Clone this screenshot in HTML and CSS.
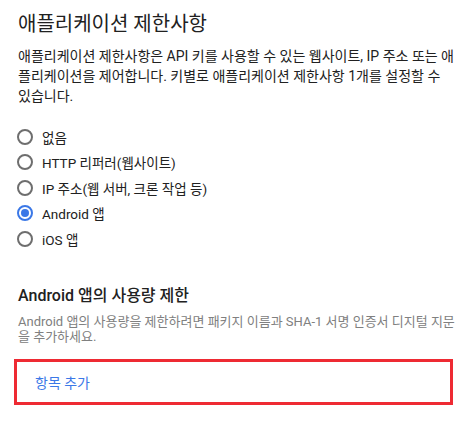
FILE: index.html
```html
<!DOCTYPE html>
<html lang="ko">
<head>
<meta charset="utf-8">
<link rel="stylesheet" href="styles.css">
</head>
<body>
<div class="page">
  <h2 class="title">애플리케이션 제한사항</h2>
  <p class="desc">애플리케이션 제한사항은 API 키를 사용할 수 있는 웹사이트, IP 주소 또는 애플리케이션을 제어합니다. 키별로 애플리케이션 제한사항 1개를 설정할 수 있습니다.</p>
  <div class="radios">
    <label class="radio"><span class="dot"></span>없음</label>
    <label class="radio"><span class="dot"></span>HTTP 리퍼러(웹사이트)</label>
    <label class="radio"><span class="dot"></span>IP 주소(웹 서버, 크론 작업 등)</label>
    <label class="radio"><span class="dot on"></span>Android 앱</label>
    <label class="radio"><span class="dot"></span>iOS 앱</label>
  </div>
  <h3 class="subtitle">Android 앱의 사용량 제한</h3>
  <p class="hint">Android 앱의 사용량을 제한하려면 패키지 이름과 SHA-1 서명 인증서 디지털 지문을 추가하세요.</p>
  <div class="addbox"><span class="add">항목 추가</span></div>
</div>
</body>
</html>
```
FILE: styles.css
```css
* { box-sizing: border-box; }
body {
  margin: 0;
  background: #fff;
  font-family: Roboto, "Noto Sans CJK KR", sans-serif;
  color: #212121;
}
.page {
  padding: 10px 15px 0 18px;
  width: 470px;
}
.title {
  margin: 0;
  font-size: 20px;
  font-weight: 400;
  line-height: 28px;
  color: #212121;
}
.desc {
  margin: 8px 0 0;
  font-size: 14px;
  line-height: 20px;
}
.radios {
  margin-top: 18px;
  display: flex;
  flex-direction: column;
}
.radio {
  display: flex;
  align-items: center;
  height: 25.5px;
  font-size: 13.5px;
}
.dot {
  width: 16px;
  height: 16px;
  border: 2px solid #6e6e6e;
  border-radius: 50%;
  margin: 0 9px 0 -1px;
  flex: none;
  display: flex;
  align-items: center;
  justify-content: center;
}
.dot.on { border-color: #3b78e7; }
.dot.on::after {
  content: "";
  width: 8px;
  height: 8px;
  border-radius: 50%;
  background: #3b78e7;
}
.subtitle {
  margin: 32px 0 0;
  font-size: 16px;
  font-weight: 500;
  line-height: 24px;
}
.hint {
  margin: 6px 0 0;
  font-size: 13px;
  line-height: 15px;
  color: #808080;
}
.addbox {
  margin: 15px 0 0 -4px;
  width: 439px;
  height: 46px;
  border: 3px solid #ee2a33;
  display: flex;
  align-items: center;
  padding-left: 18px;
}
.add {
  font-size: 14px;
  color: #3b78e7;
}
```
